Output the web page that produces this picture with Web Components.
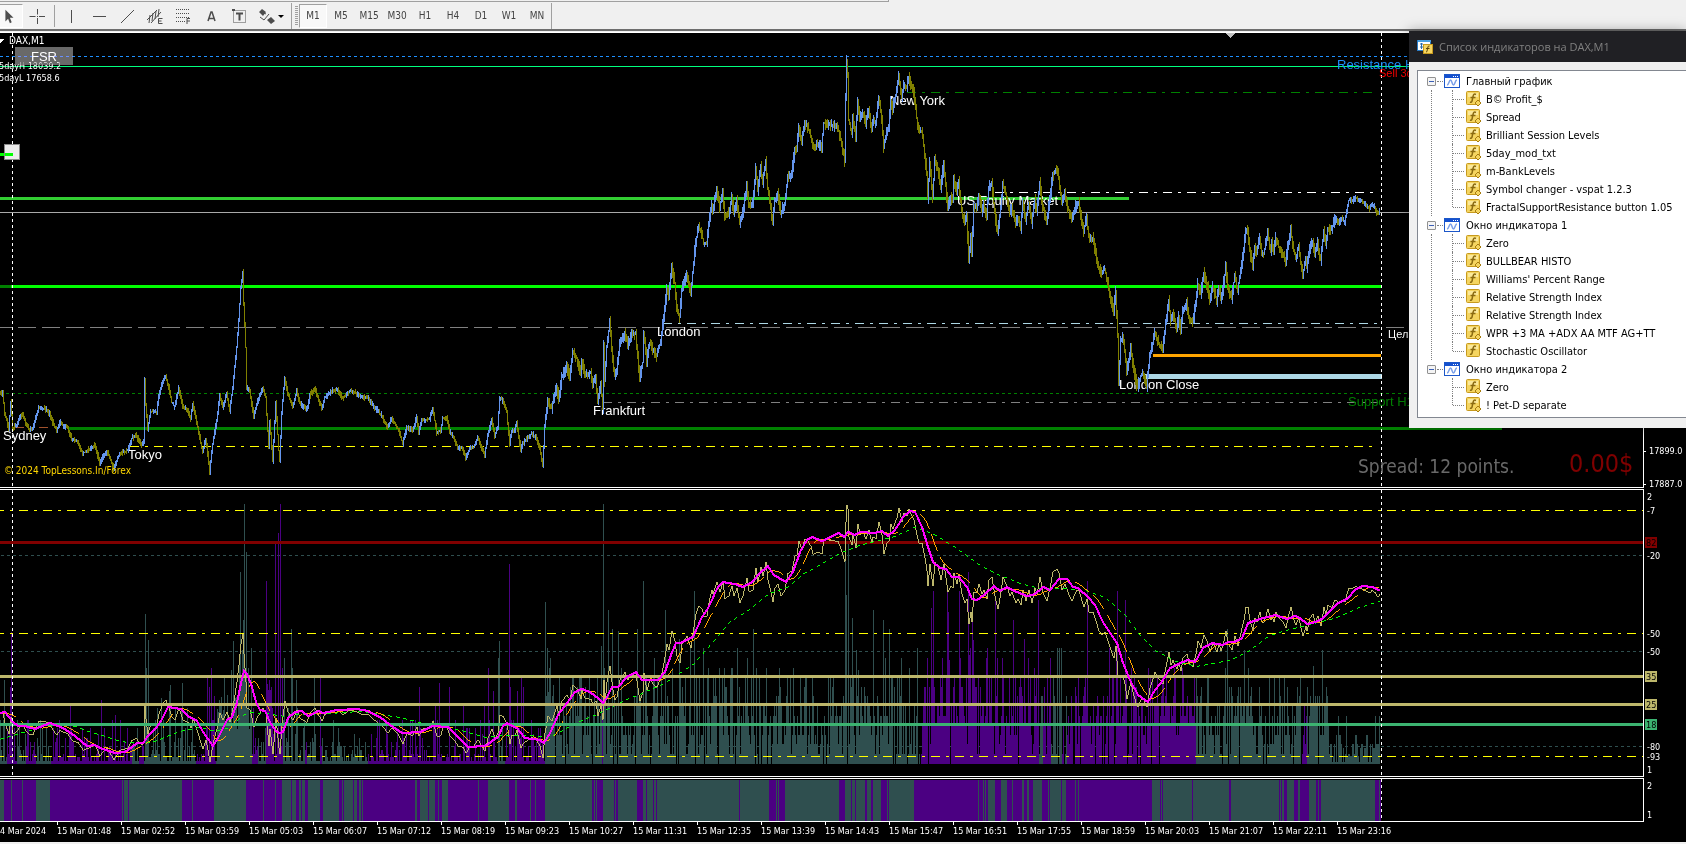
<!DOCTYPE html>
<html lang="ru">
<head>
<meta charset="utf-8">
<title>DAX,M1</title>
<style>
  html, body { margin: 0; height: 100%; }
  body {
    background: #f0f0f0;
    font-family: "DejaVu Sans Condensed", "DejaVu Sans", sans-serif;
    overflow: hidden;
  }
</style>
</head>
<body>
<trading-terminal></trading-terminal>

<script>
// ---------- helpers ----------
let seed = 7;
const random = () => {
  seed = (seed * 1103515245 + 12345) % 2147483648;
  return seed / 2147483648;
};

const toPairs = (text) => text.trim().split(/\s+/).map((p) => p.split(",").map(Number));

// value of a list of points at every whole x
const sample = (points, end) => {
  const out = [];
  let i = 0;
  for (let x = 0; x <= end; x++) {
    while (i < points.length - 2 && points[i + 1][0] <= x) i++;
    const [x0, y0] = points[i];
    const [x1, y1] = points[i + 1];
    const t = x1 == x0 ? 1 : Math.min(1, (x - x0) / (x1 - x0));
    out.push(y0 + (y1 - y0) * t);
  }
  return out;
};

const hline = (y, x1, x2, color, width = 1, dash = "") =>
  `<line x1="${x1}" x2="${x2}" y1="${y + 0.5}" y2="${y + 0.5}" stroke="${color}" stroke-width="${width}" stroke-dasharray="${dash}"/>`;

const vline = (x, y1, y2) =>
  `<line x1="${x + 0.5}" x2="${x + 0.5}" y1="${y1}" y2="${y2}" stroke="#fff" stroke-dasharray="3 3"/>`;

const polyline = (ys, color, width = 1, dash = "") =>
  `<polyline points="${ys.map((y, x) => x + "," + Math.round(y)).join(" ")}" fill="none" stroke="${color}" stroke-width="${width}" stroke-dasharray="${dash}"/>`;

const label = (x, y, text, cls, fill = "#fff") =>
  `<text x="${x}" y="${y}" class="${cls}" fill="${fill}">${text}</text>`;

const DOT = "3 3";
const DASH = "18 6";
const DASHDOT = "9 6 3 6";
const TEAL = "#2f4f4f";
const INDIGO = "#4b0082";
const LAST = 1380;

// ---------- data ----------
const price = sample(toPairs(`
0,393 3,393 5,412 7,420 9,428 11,402 13,428 17,424 20,417 23,413 26,423 29,428 33,429 36,417 39,408 45,408 50,413 53,422
57,430 60,422 68,428 72,438 78,441 83,453 88,450 95,445 100,462 107,450 114,468 120,453 128,450 132,438 136,435 142,445
144,440 145,380 146,405 148,428 151,411 157,411 159,397 163,380 166,375 169,387 172,402 175,406 179,388 183,406 188,410 191,418 193,403
197,422 200,437 203,452 206,438 208,453 210,472 213,443 217,420 220,395 223,407 227,393 230,410 233,387 237,347 239,320
241,287 243,272 244,303 246,347 247,387 250,390 254,417 257,403 263,387 266,397 269,447 270,420 273,460 276,403 279,450
280,460 282,413 285,377 288,393 293,407 297,390 300,403 307,410 310,395 315,388 322,408 325,397 333,390 338,390 343,398
350,390 357,393 362,397 368,397 375,407 382,415 388,427 392,418 398,428 403,443 407,427 413,430 417,417 419,432 422,420
430,418 433,408 437,432 441,430 443,418 447,417 450,432 454,437 458,447 463,448 466,458 470,448 474,447 478,437 482,448
485,455 488,435 492,420 495,435 498,427 500,398 503,400 507,412 510,443 512,430 515,430 517,422 521,450 523,443 532,433
536,437 540,447 543,465 545,427 548,400 552,408 557,385 559,400 562,377 567,367 570,375 573,352 577,358 581,373 582,360
585,372 591,373 593,382 596,377 598,400 601,383 603,407 604,343 605,380 607,347 610,322 613,360 615,375 617,370 620,343
625,332 628,343 632,333 636,333 638,357 640,377 643,362 644,333 647,360 650,342 653,350 657,355 661,340 664,317 667,288
669,297 672,267 675,283 677,307 680,317 682,288 687,275 691,293 693,272 696,240 699,228 702,233 704,243 707,243 709,223
712,203 713,210 717,190 720,207 723,190 725,217 729,212 732,197 734,212 737,200 740,223 743,212 747,185 749,205 753,203
756,168 758,190 761,167 763,182 766,160 768,187 771,207 773,222 775,200 778,193 781,213 785,203 788,177 792,173 795,150
797,148 799,127 802,140 805,123 808,127 811,135 813,147 818,143 822,147 824,123 832,125 838,127 842,143 845,160 846,97
847,60 848,77 849,120 852,133 853,117 856,137 858,100 860,117 863,113 866,123 869,110 872,130 873,120 876,123 879,97
882,117 884,147 887,130 889,127 891,100 893,108 897,90 899,75 902,97 904,83 907,87 909,77 912,87 914,93 917,117 919,130
922,130 925,153 927,173 928,197 930,163 933,197 935,160 938,167 941,187 944,163 948,207 951,197 953,200 954,177 957,193
959,180 962,210 965,223 967,217 969,257 971,237 972,253 974,207 977,207 979,193 982,210 984,203 987,217 989,187 992,183
995,213 998,233 1001,207 1003,183 1007,197 1010,213 1012,207 1016,223 1018,217 1021,227 1023,203 1026,220 1029,203
1032,223 1035,200 1037,210 1040,183 1043,207 1047,220 1050,200 1053,175 1057,170 1059,177 1062,203 1065,193 1068,207
1072,220 1077,203 1079,203 1082,220 1084,230 1087,217 1089,237 1093,237 1097,257 1099,267 1102,273 1105,268 1108,283
1111,297 1114,310 1116,290 1118,337 1119,380 1121,340 1123,337 1125,350 1127,373 1131,347 1133,363 1137,385 1138,386
1141,375 1143,372 1147,386 1150,357 1155,332 1158,340 1163,350 1166,323 1169,300 1171,320 1173,313 1177,327 1179,317
1181,330 1183,310 1187,303 1189,317 1193,323 1196,303 1198,283 1201,293 1204,273 1208,287 1210,300 1213,285 1217,300
1219,287 1221,298 1223,290 1226,267 1228,287 1232,297 1235,275 1238,290 1242,263 1244,250 1246,230 1248,230 1250,250
1253,267 1255,247 1257,253 1260,237 1262,253 1264,253 1268,233 1271,250 1272,243 1274,253 1276,238 1279,247 1283,253
1286,263 1288,247 1291,230 1294,250 1296,258 1299,245 1301,263 1303,275 1306,260 1307,267 1310,247 1313,240 1315,255
1318,243 1321,260 1324,230 1326,243 1328,227 1332,230 1335,218 1339,223 1342,218 1345,222 1347,210 1349,200 1353,200
1356,197 1360,200 1365,203 1370,208 1372,203 1375,207 1377,213 1379,213 1380,210`), LAST);

const average = sample(toPairs(`
0,713 5,712 13,722 18,726 25,726 35,729 50,723 63,728 75,736 87,746 95,745 103,749 115,753 125,752 137,743 143,743 147,737
157,727 162,719 168,707 175,708 181,709 188,716 197,721 203,732 213,746 218,738 227,720 232,717 237,703 241,683 244,671
247,674 252,687 256,702 260,710 265,711 270,722 275,730 279,733 283,732 288,718 295,712 302,711 308,716 318,711 323,713
337,710 357,709 368,711 380,717 390,725 402,733 420,732 433,726 448,727 458,737 468,747 485,746 498,737 503,726 507,723
517,728 525,738 540,740 544,743 550,733 558,715 567,703 575,692 582,689 590,692 598,698 603,703 607,697 612,687 618,687
627,677 636,672 642,680 658,680 665,672 672,652 676,643 680,643 693,637 702,617 708,608 718,587 723,582 735,584 743,587
752,582 760,573 768,566 774,575 786,582 793,572 800,552 807,540 812,537 822,541 839,533 844,537 848,532 855,535 860,532
875,533 882,531 888,536 895,530 903,517 910,511 915,512 922,527 928,547 933,562 940,568 946,569 952,577 959,577 967,587
972,599 977,600 985,594 994,586 1000,591 1007,587 1017,592 1027,596 1035,594 1043,587 1050,590 1059,579 1067,579 1073,587
1078,588 1088,597 1095,605 1103,622 1117,643 1123,663 1130,680 1138,695 1148,702 1155,690 1163,680 1170,668 1180,663
1188,660 1195,662 1203,648 1212,643 1223,645 1228,642 1235,642 1242,638 1248,623 1263,618 1275,615 1287,619 1295,616
1300,618 1307,624 1315,622 1323,618 1338,603 1347,599 1355,590 1362,586 1373,587 1380,591`), LAST);

const slowAverage = sample(toPairs(`
0,739 20,733 35,729 60,724 75,726 88,731 105,736 120,741 140,743 155,741 165,737 180,731 200,727 215,731 230,727 243,715
250,712 265,713 285,716 300,714 330,713 360,711 380,714 400,717 420,722 440,725 465,731 485,737 505,735 530,735 548,737
560,732 575,723 600,713 625,700 640,694 665,683 680,673 695,663 712,643 730,622 750,609 770,593 790,586 803,574 818,566
840,553 860,545 875,541 895,536 915,527 932,533 955,547 980,565 1000,575 1020,583 1040,588 1060,588 1085,590 1105,597
1125,615 1140,635 1155,650 1175,661 1197,666 1230,660 1250,650 1270,635 1290,629 1310,624 1335,618 1360,607 1380,601`), LAST);

// histogram bars that stand out: x,top
const spikes = new Map(toPairs(`
4,680 10,687 11,632 70,705 101,700 115,715 145,614 146,668 148,640 161,698 169,691 170,685 182,683 207,678 209,687 211,668 214,696 219,700
224,678 231,670 233,641 238,690 239,660 240,572 241,680 242,650 243,620 244,504 245,668 246,552 248,668 251,648 266,581 267,684
268,690 269,680 270,690 271,687 275,544 278,533 280,504 282,668 284,658 291,629 292,668 296,680 314,678 320,678
419,687 435,704 439,683 449,687 463,705 484,705 488,668 493,691 498,658 499,641 509,564 510,687 517,691 521,678 523,687
545,602 547,648 548,692 550,658 549,668 553,685 581,678 601,646 603,504 604,668 608,610 612,629 618,631 621,668 637,629 643,581
654,658 665,610 672,668 679,639 690,648 694,591 703,648 708,668 719,668 724,668 731,668 732,668 737,648 747,658 753,629
756,668 766,668 779,668 793,668 800,678 845,545 846,595 848,544 852,618 856,650 858,670 873,610 883,620 885,658 889,629 901,658
909,668 917,648 927,658 931,608 933,591 942,658 947,592 948,612 949,660 959,591 960,658 968,572 969,655 970,648 972,610 973,640 987,648
986,658 995,599 997,658 1002,658 1013,620 1024,639 1028,658 1038,600 1034,668 1050,658 1057,648 1059,648 1061,648 1087,581 1084,687 1109,648
1117,591 1116,658 1125,600 1131,668 1148,668 1174,668 1182,668 1227,629 1225,668 1244,650 1248,668 1240,687 1269,678 1274,678 1279,678 1284,678
1300,678 1313,666 1322,650 1310,696 1319,696 1327,696 1338,716 1346,716 1375,716 1379,716`));

const indigoBars = toPairs(`7,17 26,36 51,132 139,144 196,216 252,258 266,283 305,307 320,322 368,498 505,545 602,603
920,1039 1043,1051 1062,1065 1067,1196 1302,1307`);

const indigoStrip = toPairs(`4,11 12,22 23,36 50,122 123,124 128,129 182,192 193,214 246,263 264,275 276,282 291,292 296,299
301,302 305,308 320,323 339,342 343,344 353,354 357,359 361,362 363,415 417,420 428,429 435,438 439,442 448,478 479,488
509,515 517,530 531,535 536,545 592,594 595,596 597,603 614,615 616,618 637,643 646,647 653,654 656,657 739,740 769,776
777,778 779,785 839,845 851,852 855,856 865,867 871,873 881,887 888,889 914,978 979,983 984,985 986,988 995,1001
1007,1012 1013,1022 1024,1027 1029,1033 1042,1048 1049,1050 1061,1062 1066,1075 1076,1078 1079,1152 1160,1161 1162,1163
1192,1193 1229,1231 1279,1280 1281,1282 1284,1287 1294,1298 1300,1309 1316,1318 1319,1321 1375,1379 1380,1381`);

const inside = (ranges, x) => ranges.some(([a, b]) => x >= a && x < b);

// ---------- drawings ----------
const drawCandles = () => {
  let up = "", down = "";
  for (let x = 0; x < LAST; x++) {
    const a = price[x], b = price[x + 1];
    const wick = x < 545 ? 3 : x > 1335 ? 3 : 6;
    const top = Math.round(Math.min(a, b) - random() * wick);
    const bottom = Math.round(Math.max(a, b) + 1 + random() * wick);
    const rising = Math.abs(b - a) < 1.5 ? random() < 0.5 : b < a;
    const bar = `M${x} ${top}h1V${bottom}h-1z`;
    if (rising) up += bar; else down += bar;
  }
  return `<path d="${up}" fill="#6495ed"/><path d="${down}" fill="#808000"/>`;
};

const drawHistogram = () => {
  const low = [3, 7, 10, 14, 18, 22, 26, 30, 36, 44];
  const high = [10, 20, 29, 29, 38, 48, 48, 58, 58, 68, 77];
  let teal = "", indigo = "";
  for (let x = 0; x < LAST; x++) {
    let h;
    const r = random();
    if (x < 545) {
      h = low[Math.floor(r * r * (x > 145 && x < 300 ? 14 : 10))] || 56;
      if (x > 216 && x < 252) h = 30 + Math.floor(r * 40);
    } else if (x < 1330) {
      h = high[Math.floor(Math.pow(r, 1.2) * high.length)];
      if (x > 920 && x < 1196 && h < 38 && random() < 0.5) h = 38;
      if (random() < 0.06) h = 0;
      if (x < 1220 && h && random() < 0.12) h = 86;
    } else {
      h = [2, 8, 10, 16, 20, 20, 29][Math.floor(r * 7)];
    }
    if (spikes.has(x)) h = 764 - spikes.get(x);
    if (!h) continue;
    const bar = `M${x} 764v${-h}h1v${h}z`;
    if (inside(indigoBars, x)) indigo += bar; else teal += bar;
  }
  return `<path d="${teal}" fill="${TEAL}"/><path d="${indigo}" fill="${INDIGO}"/>`;
};

const percentRange = price.map((p, x) => {
  const close = x > 1117 && x < 1122 ? 338 : p;
  return Math.max(505, 460 + close * 0.64);
});

const lagged = average.map((_, x) => {
  const from = Math.max(0, x - 15);
  const part = average.slice(from, x + 1);
  return part.reduce((s, v) => s + v, 0) / part.length;
});

const drawings = {
  price: () => `
    ${hline(56, 0, 1686, "#1e90ff", 1, DOT)}
    ${hline(66, 0, 1686, "#00ff7f")}
    ${hline(92, 907, 1378, "#008000", 1, DASHDOT)}
    ${hline(154, 0, 12, "#00ff00", 3)}
    ${hline(198, 0, 1129, "#32cd32", 3)}
    ${hline(212, 0, 1686, "#a9a9a9")}
    ${hline(192, 995, 1378, "#fff", 1, DASHDOT)}
    ${hline(286, 0, 11, "#008000", 3)}
    ${hline(286, 11, 1382, "#00ff00", 3)}
    ${hline(323, 663, 1378, "#add8e6", 1, DASHDOT)}
    ${hline(327, -6, 1686, "#808080", 1, DASH)}
    ${hline(355, 1153, 1381, "#ffa500", 3)}
    ${hline(376, 1145, 1382, "#add8e6", 5)}
    ${hline(393, 0, 1686, "#008000", 1, DOT)}
    ${hline(402, 603, 1378, "#808080", 1, DASHDOT)}
    ${hline(427, 15, 68, "#a0522d", 1, DASHDOT)}
    ${hline(428, 68, 1502, "#008000", 3)}
    ${hline(446, 130, 1378, "#ffff00", 1, DASHDOT)}
    ${label(3, 440, "Sydney", "session")}
    ${label(128, 459, "Tokyo", "session")}
    ${label(593, 415, "Frankfurt", "session")}
    ${label(657, 336, "London", "session")}
    ${label(890, 105, "New York", "session")}
    ${label(957, 205, "US Equity Market", "session")}
    ${label(1119, 389, "London Close", "session")}
    ${drawCandles()}
    ${vline(12, 33, 487)}${vline(1381, 33, 487)}
    <path d="M1225 33h10l-5 5z" fill="#c0c0c0"/>
    <path d="M-4 39h8l-4 4z" fill="#fff"/>
    ${label(9, 44, "DAX,M1", "note")}
    ${label(-1, 69, "5dayH 18039.2", "small")}
    ${label(-1, 81, "5dayL 17658.6", "small")}
    ${label(4, 474, "© 2024 TopLessons.In/Forex", "note", "#ffd700")}
    ${label(1337, 69, "Resistance H1", "session", "#1e90ff")}
    ${label(1379, 77, "Sell 3d", "order", "#ff0000")}
    ${label(1388, 338, "Цель", "order")}
    ${label(1348, 406, "Support H1", "session", "#008000")}
    ${label(1358, 473, "Spread: 12 points.", "spread", "#696969")}
    ${label(1569, 472, "0.00$", "profit", "#800000")}`,

  oscillator: () => `
    ${hline(555, 1, 1686, TEAL, 1, DOT)}
    ${hline(651, 1, 1686, TEAL, 1, DOT)}
    ${hline(746, 1, 1686, TEAL, 1, DOT)}
    ${drawHistogram()}
    ${hline(510, -5, 1686, "#ffff00", 1, DASHDOT)}
    ${hline(633, -5, 1686, "#ffff00", 1, DASHDOT)}
    ${hline(756, -5, 1686, "#ffff00", 1, DASHDOT)}
    ${hline(542, 0, 1686, "#800000", 3)}
    ${polyline(percentRange, "#bdb76b")}
    ${polyline(slowAverage, "#00ff00", 1, "4 4")}
    ${polyline(lagged, "#ffa500", 1, DASH)}
    ${hline(676, 0, 1686, "#bdb76b", 3)}
    ${hline(704, 0, 1686, "#bdb76b", 3)}
    ${hline(724, 0, 1686, "#3cb371", 3)}
    ${polyline(average, "#ff00ff", 2)}
    ${vline(12, 490, 776)}${vline(1381, 490, 776)}`,

  strip: () => `
    <rect x="0" y="780" width="1381" height="41" fill="${TEAL}"/>
    <path d="${indigoStrip.map(([a, b]) => `M${a} 780H${b}V821H${a}z`).join("")}" fill="${INDIGO}"/>
    ${vline(1381, 779, 821)}`,
};

// ---------- elements ----------
class ChartPane extends HTMLElement {
  constructor() {
    super();
    const top = Number(this.getAttribute("top"));
    const height = Number(this.getAttribute("height"));
    const scale = (this.getAttribute("scale") || "").split(" ").filter(Boolean).map((s) => s.split(":"));
    const marks = scale.map(([text, y, color]) => color
      ? `<rect x="1" y="${y - 5}" width="12" height="11" fill="${color}"/>${label(2, +y + 4, text, "small", "#000")}`
      : `${text.length > 4 ? `<rect y="${y}" width="2" height="1" fill="#fff"/>` : ""}${label(text.length > 4 ? 5 : 3, +y + 3, text, "small")}`
    ).join("");

    this.attachShadow({ mode: "open" });
    this.shadowRoot.innerHTML = `
      <style>
        :host { display: flex; position: relative; margin-top: 1px; }
        .plot {
          flex: 1;
          min-width: 0;
          border: 1px solid #fff;
          border-left: 0;
        }
        .scale { flex: none; width: 42px; }
        svg { display: block; width: 100%; height: ${height}px; shape-rendering: crispEdges; }
        .scale svg { overflow: visible; }
        .small { font-size: 9px; }
        .note { font-size: 10px; }
        .session { font: 13px "Liberation Sans", Arial, sans-serif; }
        .order { font: 11px "Liberation Sans", Arial, sans-serif; }
        .spread { font-size: 19px; }
        .profit { font-size: 25px; }
      </style>
      <div class="plot"><svg><g transform="translate(0 ${-top})">${drawings[this.getAttribute("kind")]()}</g></svg></div>
      <div class="scale"><svg><g transform="translate(0 ${-top + 1})">${marks}</g></svg></div>
      <slot></slot>
    `;
  }
}
customElements.define("chart-pane", ChartPane);

class TimeAxis extends HTMLElement {
  constructor() {
    super();
    const times = this.getAttribute("times").split(" ");
    this.attachShadow({ mode: "open" });
    this.shadowRoot.innerHTML = `
      <style>
        :host {
          display: flex;
          height: 20px;
          overflow: hidden;
          color: #fff;
          font-size: 9px;
          line-height: 12px;
          white-space: nowrap;
        }
        span { flex: none; width: 64px; }
        span::before { content: ""; display: block; width: 1px; height: 3px; background: #fff; }
        .first { width: 57px; }
        .first::before { background: none; }
      </style>
      <span class="first">4 Mar 2024</span>${times.map((t) => `<span>15 Mar ${t}</span>`).join("")}
    `;
  }
}
customElements.define("time-axis", TimeAxis);

class ToolButton extends HTMLElement {
  constructor() {
    super();
    const name = this.getAttribute("name");
    this.attachShadow({ mode: "open" });
    this.shadowRoot.innerHTML = `
      <style>
        :host { display: block; flex: none; width: 28px; }
        :host([edge]) { width: 23px; }
        :host([wide]) { width: 38px; }
        button {
          width: 100%;
          height: 24px;
          padding: 0;
          border: 1px solid transparent;
          background: none;
          color: #444;
          font-family: inherit;
          font-size: 10px;
          display: flex;
          align-items: center;
          justify-content: center;
        }
        button[aria-pressed="true"] {
          background: #f8f8f8;
          border-color: #a0a0a0 #fff #fff #a0a0a0;
        }
        :host([edge]) button { border-left: 0; padding-right: 4px; }
      </style>
      <button type="button" aria-label="${name}" aria-pressed="${this.hasAttribute("pressed")}"><slot></slot></button>
    `;
  }
}
customElements.define("tool-button", ToolButton);

const icon = (body, width = 20) =>
  `<svg width="${width}" height="20" viewBox="0 0 ${width} 20" fill="none" stroke="#4d4d4d">${body}</svg>`;

const tools = [
  ["Курсор", icon('<path d="M6 3l9 9H11l2 5-2 1-2-5-3 3z" fill="#4d4d4d" stroke="none"/>'), "edge pressed"],
  ["Перекрестие", icon('<path d="M2.500 10.500h6M12 10.500h6M10.500 3v5.500M10.500 12v6"/><path d="M10 10.500h1"/>')],
  [],
  ["Вертикальная линия", icon('<path d="M10.500 4v13"/>')],
  ["Горизонтальная линия", icon('<path d="M4 10.500h13"/>')],
  ["Трендовая линия", icon('<path d="M4 17L17 4"/>')],
  ["Канал", icon('<path d="M2 14L12 4M6 17L16 6M5 9l-1 8M8 7l-1 8M11 5l-1 8M14 3l-1 8"/><path d="M17.500 12.500h-4v5h4M13.500 15h3"/>')],
  ["Фибоначчи", icon('<path d="M3 3.500h14M3 7.500h14M3 11.500h14M3 15.500h9" stroke-dasharray="1 1"/><path d="M17 12.500h-3V18M14 15h3"/>')],
  ["Текст", icon('<path d="M7 15L10 6h1L14 15M8 12.500h5" stroke-width="1.500"/>')],
  ["Метка", icon('<path d="M4.500 4.500h12v12h-12z" stroke-dasharray="1 1"/><path d="M3 3h3v2H3z" fill="#4d4d4d" stroke="none"/><path d="M7 7.500h7M10.500 7v7.500" stroke-width="2"/>')],
  ["Стрелки", icon('<path d="M5 3l4 3-3 4-4-4zM14 18l-4-4 4-3 4 4z" fill="#4d4d4d" stroke="none"/><path d="M7 7l2 1M3 11l4 3 5-6"/><path d="M21 9h6l-3 3z" fill="#000" stroke="none"/>', 30), "wide"],
];

class ChartToolbar extends HTMLElement {
  constructor() {
    super();
    this.attachShadow({ mode: "open" });
    this.shadowRoot.innerHTML = `
      <style>
        :host {
          display: block;
          height: 31px;
          box-sizing: border-box;
          background: #f0f0f0;
          border-bottom: 2px solid #6d6d6d;
        }
        .upper { width: 888px; height: 1px; border-bottom: 1px solid #a0a0a0; border-right: 1px solid #a0a0a0; }
        .row { display: flex; align-items: center; height: 27px; }
        .sep { width: 1px; height: 22px; margin: 0 2px 0 3px; background: #a0a0a0; }
        .end { width: 1px; height: 26px; background: #a0a0a0; }
        .grip { width: 3px; height: 20px; margin: 0 1px 0 3px; background: repeating-linear-gradient(#a0a0a0 0 1px, #f0f0f0 1px 2px); }
      </style>
      <div class="upper"></div>
      <div class="row">
        ${tools.map(([name, svg, flags]) => name ? `<tool-button name="${name}" ${flags || ""}>${svg}</tool-button>` : '<div class="sep"></div>').join("")}
        <div class="end"></div>
        <div class="grip"></div>
        ${["M1", "M5", "M15", "M30", "H1", "H4", "D1", "W1", "MN"].map((t) => `<tool-button name="${t}" ${t == "M1" ? "pressed" : ""}>${t}</tool-button>`).join("")}
        <div class="end"></div>
      </div>
    `;
  }
}
customElements.define("chart-toolbar", ChartToolbar);

class TreeItem extends HTMLElement {
  constructor() {
    super();
    this.attachShadow({ mode: "open" });
    this.shadowRoot.innerHTML = `
      <style>
        :host { display: flex; align-items: center; height: 18px; }
        .branch { align-self: stretch; width: 11px; border-left: 1px dotted #808080; margin-right: 2px; }
        .branch::before { content: ""; display: block; height: 9px; border-bottom: 1px dotted #808080; }
        :host(:last-child) .branch { align-self: flex-start; height: 9px; }
        svg { flex: none; margin-right: 4px; }
      </style>
      <span class="branch"></span>
      <svg width="16" height="16" viewBox="0 0 16 16">
        <rect x=".5" y=".5" width="13" height="13" rx="1" fill="#f5d560" stroke="#c79a1e"/>
        <path d="M2 2h10v4H2z" fill="#fbe99a"/>
        <path d="M10 3.500c-2-1-2.500 0-3 2L6 10c0 1-1 1.500-2 1M4.500 6.500h5" fill="none" stroke="#8a6a10" stroke-width="1.500"/>
        ${this.hasAttribute("custom") ? '<path d="M12 9l3 3-3 3-3-3z" fill="#f5d560" stroke="#a87d10"/>' : ""}
      </svg>
      <slot></slot>
    `;
  }
}
customElements.define("tree-item", TreeItem);

class TreeGroup extends HTMLElement {
  constructor() {
    super();
    this.attachShadow({ mode: "open" });
    this.shadowRoot.innerHTML = `
      <style>
        :host { display: block; }
        .head { display: flex; align-items: center; height: 18px; }
        button {
          width: 9px;
          height: 9px;
          padding: 0;
          border: 1px solid #919191;
          border-radius: 1px;
          background: linear-gradient(#3b5fb5, #3b5fb5) center / 5px 1px no-repeat #f4f4f4;
        }
        .dots { width: 6px; margin: 0 1px; border-top: 1px dotted #808080; }
        svg { margin-right: 6px; }
        .body { display: flex; }
        .guide { width: 0; margin-left: 4px; margin-right: 20px; border-left: 1px dotted #808080; }
        :host(:last-of-type) .guide { border-color: transparent; }
        .closed { display: none; }
      </style>
      <div class="head">
        <button type="button" aria-label="${this.getAttribute("name")}"></button>
        <span class="dots"></span>
        <svg width="16" height="14" viewBox="0 0 16 14">
          <rect x=".5" y=".5" width="15" height="13" fill="#fff" stroke="#1c57c9"/>
          <path d="M1 1h14v3H1z" fill="#1450cf"/>
          <path d="M9 2h1v1H9zM11 2h1v1h-1zM13 2h1v1h-1z" fill="#fff"/>
          <path d="M3 11c2 0 2-5 3.500-5S8 11 9.500 11 11 6 13 6" fill="none" stroke="#7a9fe8" stroke-width="1.500"/>
        </svg>
        <span>${this.getAttribute("name")}</span>
      </div>
      <div class="body"><div class="guide"></div><div><slot></slot></div></div>
    `;
    this.shadowRoot.querySelector("button").addEventListener("click", () => {
      this.shadowRoot.querySelector(".body").classList.toggle("closed");
    });
  }
}
customElements.define("tree-group", TreeGroup);

class IndicatorDialog extends HTMLElement {
  constructor() {
    super();
    this.attachShadow({ mode: "open" });
    this.shadowRoot.innerHTML = `
      <style>
        :host {
          display: block;
          box-sizing: border-box;
          background: #f0f0f0;
          color: #000;
          font-size: 11px;
          white-space: nowrap;
          overflow: hidden;
          box-shadow: 0 0 12px rgba(0, 0, 0, 0.35);
        }
        header {
          display: flex;
          align-items: center;
          height: 31px;
          padding-left: 8px;
          background: #202024;
          color: #808080;
          font: 11px "Open Sans", "Noto Sans", sans-serif;
        }
        header svg { margin-right: 5px; }
        .tree {
          margin: 8px 0 10px 8px;
          padding: 1px 0 3px 9px;
          border: 1px solid #828790;
          border-right: 0;
          background: #fff;
        }
      </style>
      <header>
        <svg width="17" height="16" viewBox="0 0 17 16">
          <rect x=".5" y="1.500" width="13" height="10" fill="#fff" stroke="#2b7bc4"/>
          <path d="M1 1h13v2H1z" fill="#4aa0e0"/>
          <path d="M3 5h3M4.500 4v6M3 8h3" stroke="#2b6aa8" fill="none"/>
          <rect x="6.500" y="5.500" width="9" height="9" fill="#f5d560" stroke="#c79a1e"/>
          <path d="M12.500 7c-2-.5-1.500 2-2 3s0 3-1.500 3M9 9.500h3.500" stroke="#5a4208" fill="none"/>
        </svg>
        <span>${this.getAttribute("title-text")}</span>
      </header>
      <div class="tree"><slot></slot></div>
    `;
  }
}
customElements.define("indicator-dialog", IndicatorDialog);

class TradingTerminal extends HTMLElement {
  constructor() {
    super();
    this.attachShadow({ mode: "open" });
    this.shadowRoot.innerHTML = `
      <style>
        :host { display: block; position: relative; }
        .charts { background: #000; }
        .fsr, .anchor { position: absolute; padding: 0; }
        .fsr {
          left: 15px;
          top: 15px;
          width: 58px;
          height: 18px;
          border: 0;
          background: #696969;
          mix-blend-mode: lighten;
          color: #fff;
          font: 13px "Liberation Sans", Arial, sans-serif;
        }
        .anchor {
          left: 4px;
          top: 112px;
          width: 16px;
          height: 16px;
          border: 1px solid #8a8a8a;
          background: linear-gradient(#00ff00, #00ff00) 0 8px / 8px 3px no-repeat #ececec;
        }
        indicator-dialog { position: absolute; top: 31px; right: 0; width: 277px; }
      </style>
      <chart-toolbar></chart-toolbar>
      <div class="charts">
        <chart-pane kind="price" top="33" height="454" scale="17899.0:451 17887.0:484">
          <button class="fsr" type="button">FSR</button>
          <button class="anchor" type="button" aria-label="M"></button>
        </chart-pane>
        <chart-pane kind="oscillator" top="490" height="286"
          scale="2:497 -7:511 82:542:#800000 -20:556 -50:634 -50:652 35:676:#bdb76b 25:704:#bdb76b 18:724:#3cb371 -80:747 -93:757 1:770"></chart-pane>
        <chart-pane kind="strip" top="779" height="42" scale="2:786 1:815"></chart-pane>
        <time-axis times="01:48 02:52 03:59 05:03 06:07 07:12 08:19 09:23 10:27 11:31 12:35 13:39 14:43 15:47 16:51 17:55 18:59 20:03 21:07 22:11 23:16"></time-axis>
      </div>
      <indicator-dialog title-text="Список индикаторов на DAX,M1">
        <tree-group name="Главный график">
          <tree-item custom>B© Profit_$</tree-item>
          <tree-item custom>Spread</tree-item>
          <tree-item custom>Brilliant Session Levels</tree-item>
          <tree-item custom>5day_mod_txt</tree-item>
          <tree-item custom>m-BankLevels</tree-item>
          <tree-item custom>Symbol changer - vspat 1.2.3</tree-item>
          <tree-item custom>FractalSupportResistance button 1.05</tree-item>
        </tree-group>
        <tree-group name="Окно индикатора 1">
          <tree-item custom>Zero</tree-item>
          <tree-item custom>BULLBEAR HISTO</tree-item>
          <tree-item>Williams' Percent Range</tree-item>
          <tree-item>Relative Strength Index</tree-item>
          <tree-item>Relative Strength Index</tree-item>
          <tree-item custom>WPR +3 MA +ADX AA MTF AG+TT</tree-item>
          <tree-item>Stochastic Oscillator</tree-item>
        </tree-group>
        <tree-group name="Окно индикатора 2">
          <tree-item custom>Zero</tree-item>
          <tree-item custom>! Pet-D separate</tree-item>
        </tree-group>
      </indicator-dialog>
    `;
  }
}
customElements.define("trading-terminal", TradingTerminal);
</script>
</body>
</html>
